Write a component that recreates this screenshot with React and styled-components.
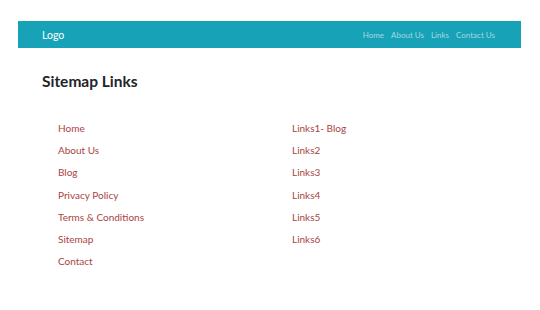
import styled, { createGlobalStyle } from "styled-components";

const GlobalStyle = createGlobalStyle`
  body {
    margin: 0;
    background: #fff;
    font-family: Lato, "Open Sans", sans-serif;
  }
`;

const mainLinks = [
  "Home",
  "About Us",
  "Blog",
  "Privacy Policy",
  "Terms & Conditions",
  "Sitemap",
  "Contact",
];

const extraLinks = ["Links1- Blog", "Links2", "Links3", "Links4", "Links5", "Links6"];

const App = () => {
  return (
    <>
      <GlobalStyle />
      <Page>
        <Navbar>
          <Logo>Logo</Logo>
          <NavMenu>
            <NavItem>Home</NavItem>
            <NavItem>About Us</NavItem>
            <NavItem>Links</NavItem>
            <NavItem>Contact Us</NavItem>
          </NavMenu>
        </Navbar>
        <Content>
          <Title>Sitemap Links</Title>
          <Columns>
            <LinkList>
              {mainLinks.map((l) => (
                <LinkItem key={l}>{l}</LinkItem>
              ))}
            </LinkList>
            <LinkList>
              {extraLinks.map((l) => (
                <LinkItem key={l}>{l}</LinkItem>
              ))}
            </LinkList>
          </Columns>
        </Content>
      </Page>
    </>
  );
};

export default App;

const Page = styled.div`
  padding: 21px 19px 0 18px;
`;

const Navbar = styled.nav`
  height: 27px;
  background: #17a2b8;
  display: flex;
  align-items: center;
  justify-content: space-between;
  padding: 0 26px 0 24px;
`;

const Logo = styled.div`
  color: #fff;
  font-size: 10.5px;
`;

const NavMenu = styled.ul`
  display: flex;
  gap: 7px;
  margin: 0;
  padding: 0;
  list-style: none;
`;

const NavItem = styled.li`
  color: rgba(255, 255, 255, 0.6);
  font-size: 8px;
`;

const Content = styled.div`
  padding: 0 24px;
`;

const Title = styled.h1`
  margin: 24px 0 31px;
  font-size: 15.5px;
  font-weight: 700;
  color: #212529;
`;

const Columns = styled.div`
  display: grid;
  grid-template-columns: 234px 1fr;
  padding-left: 16px;
`;

const LinkList = styled.ul`
  margin: 0;
  padding: 0;
  list-style: none;
  display: flex;
  flex-direction: column;
  gap: 8px;
`;

const LinkItem = styled.li`
  color: #a94442;
  font-size: 10px;
  line-height: 14.2px;
  cursor: pointer;
`;
